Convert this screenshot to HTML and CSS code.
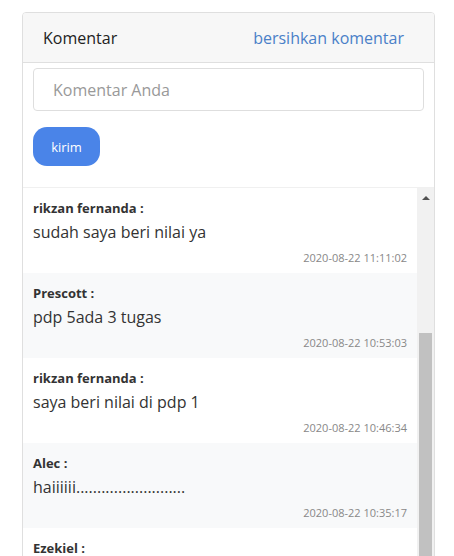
FILE: index.html
```html
<!DOCTYPE html>
<html lang="id">
<head>
<meta charset="utf-8">
<title>Komentar</title>
<link rel="stylesheet" href="styles.css">
</head>
<body>
<div class="card">
  <div class="card-header">
    <span class="title">Komentar</span>
    <a class="clear-link" href="#">bersihkan komentar</a>
  </div>
  <div class="card-body">
    <input class="comment-input" type="text" placeholder="Komentar Anda">
    <button class="send-btn" type="button">kirim</button>
  </div>
  <div class="list-wrap">
    <div class="list">
      <div class="comment">
        <div class="name">rikzan fernanda :</div>
        <div class="message">sudah saya beri nilai ya</div>
        <div class="date">2020-08-22 11:11:02</div>
      </div>
      <div class="comment alt">
        <div class="name">Prescott :</div>
        <div class="message">pdp 5ada 3 tugas</div>
        <div class="date">2020-08-22 10:53:03</div>
      </div>
      <div class="comment">
        <div class="name">rikzan fernanda :</div>
        <div class="message">saya beri nilai di pdp 1</div>
        <div class="date">2020-08-22 10:46:34</div>
      </div>
      <div class="comment alt">
        <div class="name">Alec :</div>
        <div class="message">haiiiiii..........................</div>
        <div class="date">2020-08-22 10:35:17</div>
      </div>
      <div class="comment">
        <div class="name">Ezekiel :</div>
        <div class="message">oke</div>
        <div class="date">2020-08-22 10:30:00</div>
      </div>
    </div>
    <div class="scrollbar">
      <div class="arrow-btn"><span class="arrow"></span></div>
      <div class="thumb"></div>
    </div>
  </div>
</div>
</body>
</html>
```
FILE: styles.css
```css
* { box-sizing: border-box; }
html, body { margin: 0; padding: 0; background: #fff; }
body {
  font-family: "Open Sans", "Noto Sans", sans-serif;
  color: #333;
  padding: 12px 0 0 22px;
}
.card {
  width: 413px;
  border: 1px solid #dfdfdf;
  border-radius: 4px;
  background: #fff;
  overflow: hidden;
}
.card-header {
  display: flex;
  justify-content: space-between;
  align-items: center;
  background: #f7f7f7;
  border-bottom: 1px solid #dfdfdf;
  padding: 12px 30px 12px 20px;
  height: 50px;
  font-size: 16px;
  line-height: 24px;
}
.title { color: #222; }
.clear-link { color: #4a80c8; text-decoration: none; }
.card-body {
  display: flex;
  flex-direction: column;
  align-items: flex-start;
  padding: 5px 10px 21px 10px;
  gap: 16px;
}
.comment-input {
  width: 391px;
  height: 43px;
  border: 1px solid #dedede;
  border-radius: 4px;
  padding: 0 19px;
  font-family: inherit;
  font-size: 16px;
  color: #333;
  outline: none;
}
.comment-input::placeholder { color: #999; }
.send-btn {
  width: 67px;
  height: 39px;
  border: none;
  border-radius: 14px;
  background: #4a84e8;
  color: #fff;
  font-family: inherit;
  font-size: 13px;
  padding: 0;
}
.list-wrap {
  display: flex;
  border-top: 1px solid #f0f0f0;
}
.list { flex: 1; min-width: 0; }
.comment {
  padding: 10px 10px 7px 10px;
  height: 85px;
  background: #fff;
}
.comment.alt { background: #f8f9fa; }
.name {
  font-size: 13px;
  font-weight: 700;
  line-height: 20px;
  color: #333;
}
.message {
  font-size: 16px;
  line-height: 24px;
  margin-top: 2px;
  color: #333;
}
.date {
  font-size: 11px;
  line-height: 16px;
  margin-top: 6px;
  text-align: right;
  color: #888;
}
.scrollbar {
  width: 17px;
  background: #f1f1f1;
  display: flex;
  flex-direction: column;
  align-items: center;
}
.arrow-btn {
  height: 17px;
  width: 17px;
  display: flex;
  align-items: center;
  justify-content: center;
  margin-top: 1px;
}
.arrow {
  width: 0;
  height: 0;
  border-left: 4px solid transparent;
  border-right: 4px solid transparent;
  border-bottom: 4px solid #505050;
}
.thumb {
  width: 13px;
  flex: 1;
  margin-top: 127px;
  background: #c1c1c1;
}
```
